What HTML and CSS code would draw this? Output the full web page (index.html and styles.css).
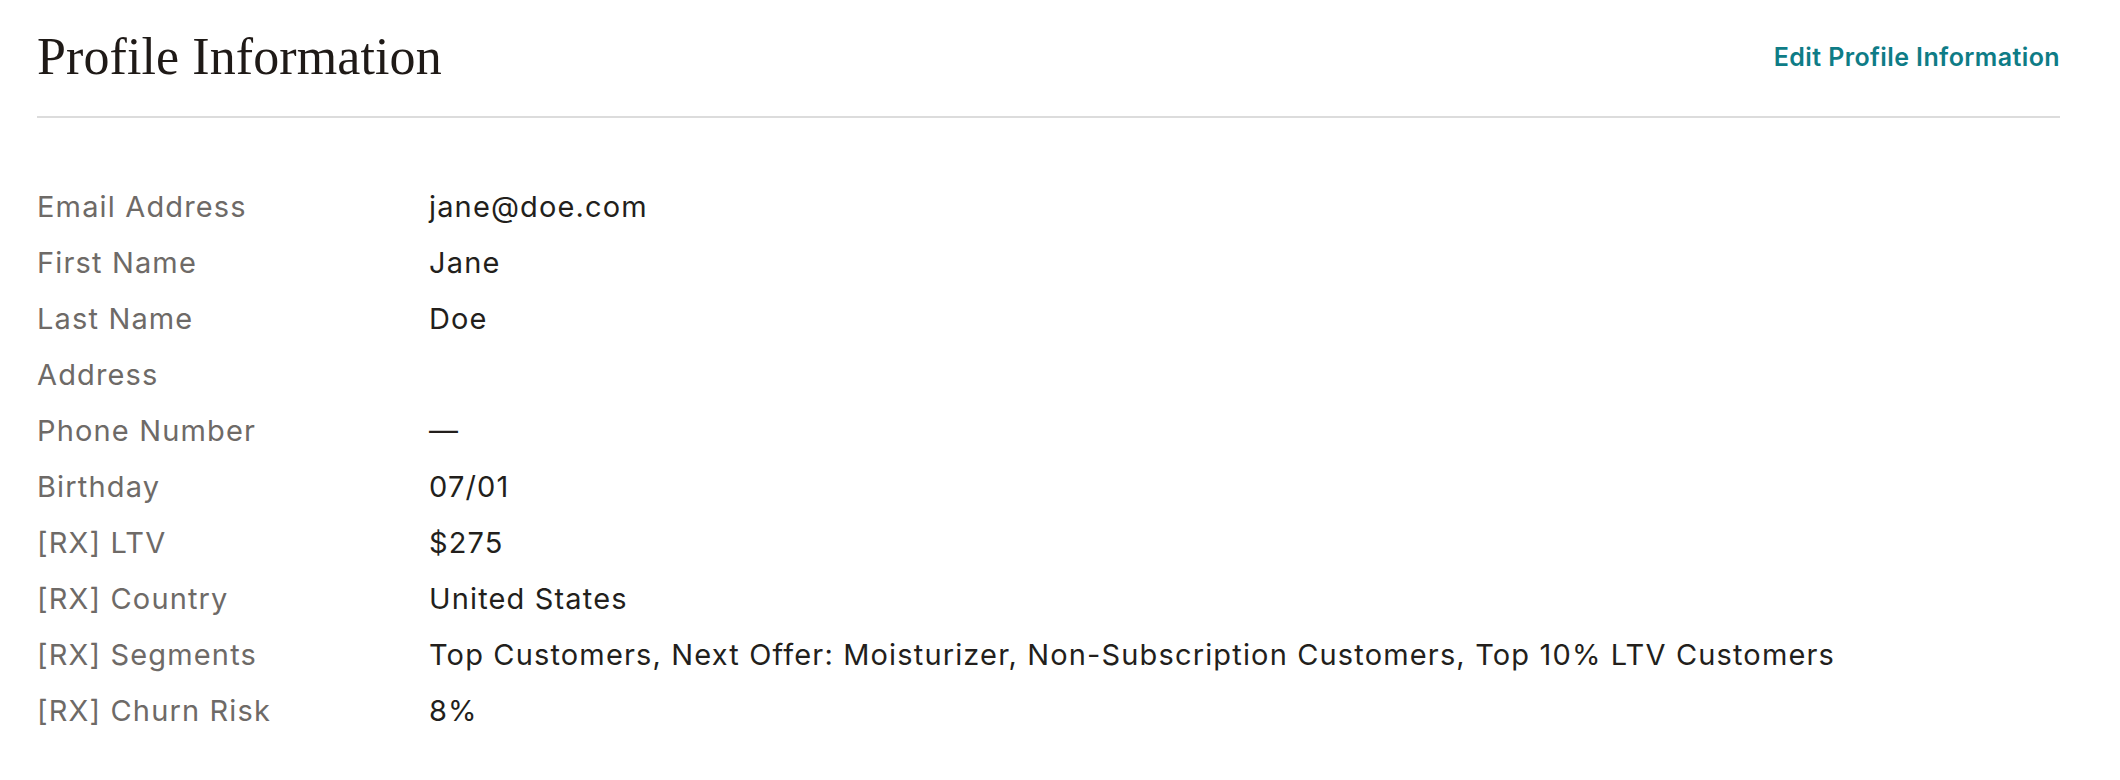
FILE: index.html
```html
<!DOCTYPE html>
<html lang="en">
<head>
<meta charset="utf-8">
<title>Profile Information</title>
<link rel="stylesheet" href="styles.css">
</head>
<body>
<section class="profile">
  <header class="profile-header">
    <h1 class="profile-title">Profile Information</h1>
    <a class="edit-link" href="#">Edit Profile Information</a>
  </header>
  <dl class="fields">
    <div class="field"><dt>Email Address</dt><dd>jane@doe.com</dd></div>
    <div class="field"><dt>First Name</dt><dd>Jane</dd></div>
    <div class="field"><dt>Last Name</dt><dd>Doe</dd></div>
    <div class="field"><dt>Address</dt><dd></dd></div>
    <div class="field"><dt>Phone Number</dt><dd>—</dd></div>
    <div class="field"><dt>Birthday</dt><dd>07/01</dd></div>
    <div class="field"><dt>[RX] LTV</dt><dd>$275</dd></div>
    <div class="field"><dt>[RX] Country</dt><dd>United States</dd></div>
    <div class="field"><dt>[RX] Segments</dt><dd>Top Customers, Next Offer: Moisturizer, Non-Subscription Customers, Top 10% LTV Customers</dd></div>
    <div class="field"><dt>[RX] Churn Risk</dt><dd>8%</dd></div>
  </dl>
</section>
</body>
</html>
```
FILE: styles.css
```css
html, body {
  margin: 0;
  padding: 0;
  background: #ffffff;
}

body {
  font-family: Inter, "Liberation Sans", sans-serif;
  color: #231f1c;
}

.profile {
  padding: 0 60px 0 37px;
}

.profile-header {
  display: flex;
  justify-content: space-between;
  align-items: center;
  padding: 27px 0 29px;
  border-bottom: 2px solid #dcdcdc;
}

.profile-title {
  margin: 0;
  font-family: "Liberation Serif", "Times New Roman", serif;
  font-weight: 400;
  font-size: 52px;
  line-height: 60px;
  color: #1f1a17;
  letter-spacing: 0.1px;
}

.edit-link {
  font-family: Inter, "Liberation Sans", sans-serif;
  font-weight: 600;
  font-size: 25px;
  color: #0e7c86;
  text-decoration: none;
  letter-spacing: 0.4px;
}

.fields {
  margin: 61px 0 0;
  padding: 0;
}

.field {
  display: grid;
  grid-template-columns: 392px 1fr;
  font-size: 29px;
  line-height: 56px;
  height: 56px;
  letter-spacing: 1.15px;
}

.field dt {
  margin: 0;
  color: #6e6a67;
}

.field dd {
  margin: 0;
  color: #231f1c;
  white-space: nowrap;
}
```
